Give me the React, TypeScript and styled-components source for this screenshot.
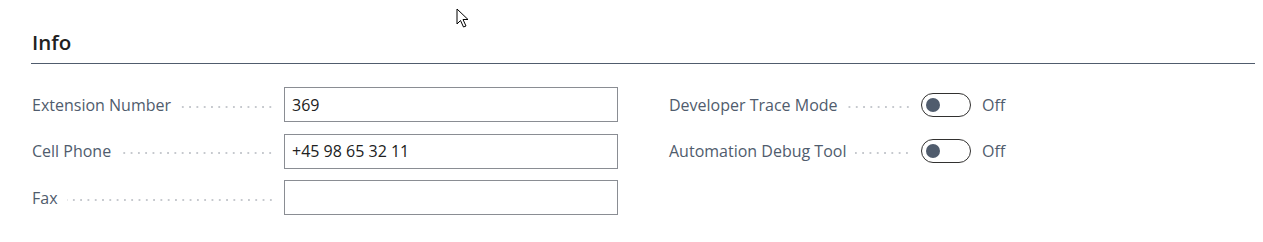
import React from 'react';
import styled, { createGlobalStyle } from 'styled-components';

const GlobalStyle = createGlobalStyle`
  html, body {
    margin: 0;
    padding: 0;
    background: #ffffff;
  }
  body {
    font-family: "Open Sans", "Noto Sans", "Liberation Sans", sans-serif;
  }
`;

const Page = styled.div`
  position: relative;
  width: 1263px;
  height: 242px;
  box-sizing: border-box;
  padding: 29px 8px 0 31px;
  background: #fff;
`;

const SectionTitle = styled.h2`
  margin: 0;
  padding: 0 0 7px 1px;
  font-size: 20.5px;
  font-weight: 600;
  line-height: 27px;
  color: #212121;
  border-bottom: 1px solid #505c6d;
`;

const Columns = styled.div`
  display: grid;
  grid-template-columns: 587px 587px;
  column-gap: 50px;
  margin-top: 23px;
`;

const FieldList = styled.div`
  display: flex;
  flex-direction: column;
  gap: 11.5px;
`;

const Row = styled.div`
  display: flex;
  align-items: center;
  height: 35px;
`;

const Caption = styled.div`
  display: flex;
  align-items: center;
  width: 253px;
  flex: none;
  padding-right: 10px;
  box-sizing: border-box;
`;

const Label = styled.span`
  font-size: 16px;
  color: #505c6d;
  white-space: nowrap;
  padding-left: 1px;
`;

const Leader = styled.span`
  flex: 1;
  height: 2px;
  margin: 4px 0 0 9px;
  background-image: radial-gradient(circle, #c6c9ce 0.9px, transparent 1.1px);
  background-size: 7.3px 2px;
  background-position: right center;
  background-repeat: repeat-x;
`;

const TextBox = styled.input`
  width: 334px;
  height: 35px;
  box-sizing: border-box;
  border: 1px solid #8a8d93;
  border-radius: 0;
  padding: 0 7px;
  font-family: inherit;
  font-size: 16px;
  color: #212121;
  background: #fff;
  outline: none;
`;

const SwitchWrap = styled.div`
  display: flex;
  align-items: center;
  gap: 11px;
`;

const Track = styled.span<{ $on: boolean }>`
  display: flex;
  align-items: center;
  justify-content: ${(p) => (p.$on ? 'flex-end' : 'flex-start')};
  width: 50px;
  height: 24px;
  box-sizing: border-box;
  border: 1px solid #323130;
  border-radius: 12px;
  padding: 0 4px;
`;

const Knob = styled.span`
  width: 14px;
  height: 14px;
  border-radius: 50%;
  background: #505c6d;
`;

const SwitchText = styled.span`
  font-size: 16px;
  color: #505c6d;
`;

const Cursor = styled.svg`
  position: absolute;
  left: 456px;
  top: 8px;
`;

type Field = { label: string; value: string };

const leftFields: Field[] = [
  { label: 'Extension Number', value: '369' },
  { label: 'Cell Phone', value: '+45 98 65 32 11' },
  { label: 'Fax', value: '' },
];

const rightFields = ['Developer Trace Mode', 'Automation Debug Tool'];

const App = () => (
  <>
    <GlobalStyle />
    <Page>
      <SectionTitle>Info</SectionTitle>
      <Columns>
        <FieldList>
          {leftFields.map((f) => (
            <Row key={f.label}>
              <Caption>
                <Label>{f.label}</Label>
                <Leader />
              </Caption>
              <TextBox defaultValue={f.value} />
            </Row>
          ))}
        </FieldList>
        <FieldList>
          {rightFields.map((label) => (
            <Row key={label}>
              <Caption>
                <Label>{label}</Label>
                <Leader />
              </Caption>
              <SwitchWrap>
                <Track $on={false}>
                  <Knob />
                </Track>
                <SwitchText>Off</SwitchText>
              </SwitchWrap>
            </Row>
          ))}
        </FieldList>
      </Columns>
      <Cursor width="14" height="21" viewBox="0 0 14 21">
        <path
          d="M1 1 L1 16 L4.5 12.5 L7.5 19 L10 18 L7 11.5 L12 11.5 Z"
          fill="#fff"
          stroke="#000"
          strokeWidth="1"
          strokeLinejoin="miter"
        />
      </Cursor>
    </Page>
  </>
);

export default App;
